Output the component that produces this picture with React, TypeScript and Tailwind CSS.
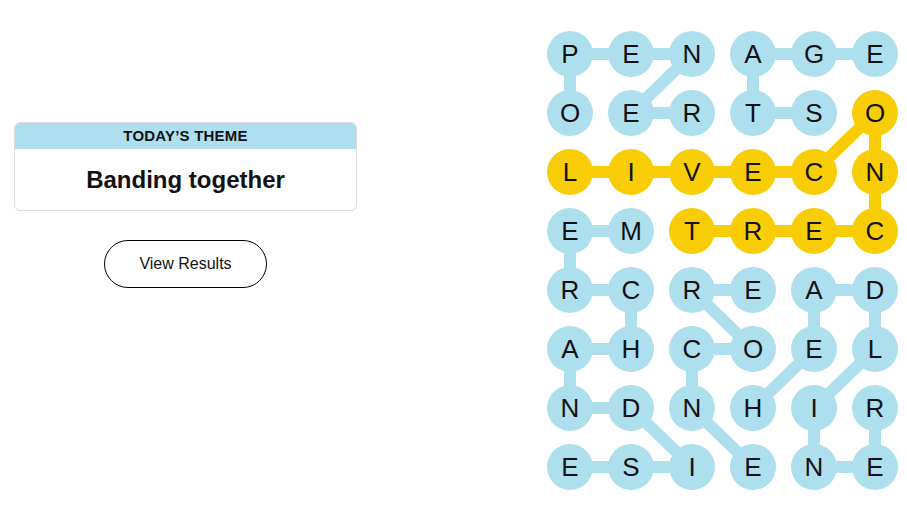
import React from 'react';

const LETTERS = [
  'PENAGE',
  'OERTSO',
  'LIVECN',
  'EMTREC',
  'RCREAD',
  'AHCOEL',
  'NDNHIR',
  'ESIENE',
];

type Cell = [number, number];
type Word = { path: Cell[]; spangram?: boolean };

const WORDS: Word[] = [
  { path: [[1, 0], [0, 0], [0, 1], [0, 2], [1, 1], [1, 2]] },
  { path: [[1, 4], [1, 3], [0, 3], [0, 4], [0, 5]] },
  {
    path: [[2, 0], [2, 1], [2, 2], [2, 3], [2, 4], [1, 5], [2, 5], [3, 5], [3, 4], [3, 3], [3, 2]],
    spangram: true,
  },
  { path: [[3, 1], [3, 0], [4, 0], [4, 1], [5, 1], [5, 0], [6, 0], [6, 1], [7, 2], [7, 1], [7, 0]] },
  { path: [[7, 3], [6, 2], [5, 2], [5, 3], [4, 2], [4, 3]] },
  { path: [[6, 3], [5, 4], [4, 4], [4, 5], [5, 5], [6, 4], [7, 4], [7, 5], [6, 5]] },
];

const SIZE = 46;
const COL_STEP = 61;
const ROW_STEP = 59;

const cx = (c: number) => SIZE / 2 + c * COL_STEP;
const cy = (r: number) => SIZE / 2 + r * ROW_STEP;

const isSpangram = (r: number, c: number) =>
  WORDS.some((w) => w.spangram && w.path.some(([pr, pc]) => pr === r && pc === c));

const Board = () => {
  return (
    <div className="relative w-[351px] h-[459px]">
      <svg className="absolute inset-0" width={351} height={459}>
        {WORDS.map((w, i) => (
          <polyline
            key={i}
            points={w.path.map(([r, c]) => `${cx(c)},${cy(r)}`).join(' ')}
            fill="none"
            stroke={w.spangram ? '#f8cd05' : '#aedfee'}
            strokeWidth={12}
            strokeLinejoin="round"
          />
        ))}
      </svg>
      <div className="relative grid grid-cols-[repeat(6,46px)] gap-x-[15px] gap-y-[13px]">
        {LETTERS.map((row, r) =>
          row.split('').map((ch, c) => (
            <button
              key={`${r}-${c}`}
              className={
                'flex h-[46px] w-[46px] items-center justify-center rounded-full text-[26px] leading-none text-[#121212] ' +
                (isSpangram(r, c) ? 'bg-[#f8cd05]' : 'bg-[#aedfee]')
              }
            >
              {ch}
            </button>
          ))
        )}
      </div>
    </div>
  );
};

export default function App() {
  return (
    <div className="flex min-h-[510px] w-[907px] bg-white font-['Liberation_Sans',Arial,sans-serif] text-[#121212]">
      <div className="ml-[14px] flex w-[343px] flex-col pt-[122px]">
        <div className="overflow-hidden rounded-[6px] border border-[#dcdcdc]">
          <div className="flex h-[26px] items-center justify-center bg-[#aedfee] text-[15px] font-bold uppercase tracking-[0.2px]">
            Today’s Theme
          </div>
          <div className="flex h-[61px] items-center justify-center text-[24px] font-bold">
            Banding together
          </div>
        </div>
        <button className="mx-auto mt-[29px] h-[48px] w-[163px] rounded-full border border-black text-[16px]">
          View Results
        </button>
      </div>
      <div className="ml-[190px] mt-[31px]">
        <Board />
      </div>
    </div>
  );
}
